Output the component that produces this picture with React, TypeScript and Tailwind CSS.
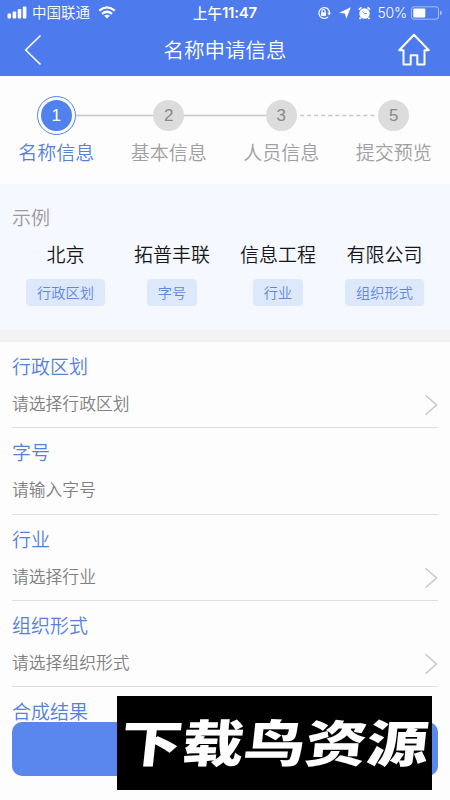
import React from "react";

const steps = [
  { n: "1", label: "名称信息" },
  { n: "2", label: "基本信息" },
  { n: "3", label: "人员信息" },
  { n: "5", label: "提交预览" },
];

const examples = [
  { value: "北京", tag: "行政区划", width: "w-[107px]" },
  { value: "拓普丰联", tag: "字号", width: "w-[106px]" },
  { value: "信息工程", tag: "行业", width: "w-[106px]" },
  { value: "有限公司", tag: "组织形式", width: "w-[107px]" },
];

const fields = [
  { label: "行政区划", hint: "请选择行政区划", select: true },
  { label: "字号", hint: "请输入字号", select: false },
  { label: "行业", hint: "请选择行业", select: true },
  { label: "组织形式", hint: "请选择组织形式", select: true },
];

function StatusBar() {
  return (
    <div className="grid h-[25px] grid-cols-[1fr_auto_1fr] items-center pl-[7px] pr-[7px] text-[14.5px] leading-[23px]">
      <div className="flex h-[25px] items-center">
        <svg width="21" height="13" viewBox="0 0 21 13" fill="white">
          <rect x="0.5" y="7.5" width="3.6" height="5" rx="1" />
          <rect x="5.6" y="5.5" width="3.6" height="7" rx="1" />
          <rect x="10.7" y="3" width="3.6" height="9.5" rx="1" />
          <rect x="15.8" y="0.5" width="3.6" height="12" rx="1" />
        </svg>
        <span className="ml-[4px] pb-[2px]">中国联通</span>
        <svg className="ml-[8px]" width="18" height="13" viewBox="0 0 18 13" fill="none" stroke="white" strokeWidth="2.3">
          <path d="M1.2 4.7Q9-2 16.8 4.7" />
          <path d="M4 7.8Q9 3.6 14 7.8" />
          <path d="M6.2 9.7Q9 7.6 11.8 9.7L9 12.6Z" fill="white" stroke="none" />
        </svg>
      </div>
      <span className="flex items-center pb-[1px] font-medium">
        上午
        <span className="text-[15px] font-bold tracking-[-0.2px] [font-family:Inter,sans-serif] [font-weight:600]">11:47</span>
      </span>
      <div className="flex h-[25px] items-center justify-end">
        <svg width="14" height="14" viewBox="0 0 14 14" fill="none" stroke="white" strokeWidth="1.2">
          <path d="M11.4 3.5A5.4 5.4 0 1 0 11.2 10.8M10.6 2.5A5.4 5.4 0 0 1 12.2 7.6" />
          <path d="M10.2 6.8H14L12.1 9.3Z" fill="white" stroke="none" />
          <rect x="4" y="6.2" width="5" height="3.8" rx="0.4" fill="white" stroke="none" />
          <path d="M5 6.5V5a1.5 1.5 0 0 1 3 0v1.5" />
        </svg>
        <svg className="ml-[8px]" width="12" height="12" viewBox="0 0 12 12" fill="white">
          <path d="M11.8.3 7.4 11.8 5.9 6.5 .2 5.8Z" />
        </svg>
        <svg className="ml-[7px]" width="13" height="14" viewBox="0 0 13 14">
          <circle cx="6.5" cy="7.5" r="5.2" fill="white" />
          <path d="M.9 3.7 3.5 1.4M12.1 3.7 9.5 1.4M2.7 11.4 1.6 13M10.3 11.4 11.4 13" stroke="white" strokeWidth="1.8" />
          <path d="M4.2 5.4 6.5 7.8 8.8 7.4" fill="none" stroke="#4d7aec" strokeWidth="0.9" />
        </svg>
        <span className="ml-[7px] text-[14px] tracking-[-0.2px] [font-family:Inter,sans-serif]">50%</span>
        <svg className="ml-[4px]" width="32" height="14" viewBox="0 0 32 14">
          <rect x="0.5" y="0.8" width="27" height="12.4" rx="2.5" fill="none" stroke="white" strokeOpacity=".5" />
          <rect x="2.3" y="2.5" width="12" height="9" rx="1" fill="white" />
          <path d="M29 4.8Q31 5.2 31 7T29 9.2Z" fill="white" fillOpacity=".5" />
        </svg>
      </div>
    </div>
  );
}

function Connector({ dashed }: { dashed: boolean }) {
  return (
    <svg className="absolute left-1/2 top-[18px] h-[3px] w-full" viewBox="0 0 112 3" preserveAspectRatio="none">
      {dashed ? (
        <path d="M19 1.5H96" stroke="#c7c7c7" strokeWidth="1.3" strokeDasharray="4 3" />
      ) : (
        <path d="M0 1.5H112" stroke="#c7c7c7" strokeWidth="1.3" />
      )}
    </svg>
  );
}

export default function App() {
  return (
    <div className="relative h-[800px] w-[450px] overflow-hidden bg-[#fdfdfd] font-[350] [font-family:'Noto_Sans_CJK_SC',sans-serif]">
      <header className="h-[76px] bg-[#4d7aec] text-white">
        <StatusBar />
        <div className="grid h-[50px] grid-cols-[1fr_auto_1fr] items-center px-[18px]">
          <svg className="ml-[6px]" width="18" height="32" viewBox="0 0 18 32" fill="none" stroke="white" strokeWidth="1.6">
            <path d="M16.5 1.5 1.7 16 16.5 30.5" />
          </svg>
          <h1 className="pb-[2px] text-[20.5px] leading-[30px] [font-weight:350]">名称申请信息</h1>
          <svg className="mr-[2px] justify-self-end" width="34" height="34" viewBox="0 0 34 34" fill="none" stroke="white" strokeWidth="2" strokeLinejoin="round">
            <path d="M18 1.8 3.2 17.3H7.5V31.5H14.7V22.3H21.3V31.5H28.5V17.3H32.8Z" />
          </svg>
        </div>
      </header>

      <section className="flex h-[108px] pt-[20px]">
        {steps.map((step, i) => (
          <div key={step.n} className="relative flex w-[112.5px] flex-col items-center">
            {i < 3 && <Connector dashed={i === 2} />}
            <div className={i === 0 ? "relative flex h-[39px] w-[39px] items-center justify-center rounded-full border-[1.5px] border-[#5684ed] bg-[#fdfdfd]" : "relative flex h-[39px] w-[39px] items-center justify-center"}>
              <div className={i === 0 ? "flex h-[31px] w-[31px] items-center justify-center rounded-full bg-[#5081ec] text-[17px] text-white [font-family:'Liberation_Sans',sans-serif]" : "flex h-[31px] w-[31px] items-center justify-center rounded-full bg-[#dcdcdc] text-[17px] text-[#888] [font-family:'Liberation_Sans',sans-serif]"}>
                {step.n}
              </div>
            </div>
            <span className={i === 0 ? "mt-[3px] text-[19px] leading-[28px] text-[#5580df]" : "mt-[3px] text-[19px] leading-[28px] text-[#a0a0a0]"}>{step.label}</span>
          </div>
        ))}
      </section>

      <section className="h-[158px] border-b-[12px] border-[#f3f3f3] bg-[#f5f8ff] pl-[12px] pt-[19px]">
        <h2 className="text-[19px] leading-[28px] text-[#9b9b9b] [font-weight:350]">示例</h2>
        <div className="mt-[9px] flex">
          {examples.map((item) => (
            <div key={item.tag} className={`flex flex-col items-center ${item.width}`}>
              <span className="text-[19px] leading-[28px] text-[#161616]">{item.value}</span>
              <span className="mt-[11px] flex h-[27px] items-center rounded-[4px] bg-[#dee8fb] px-[11px] pb-[1px] text-[14.2px] leading-[26px] text-[#6088dc]">{item.tag}</span>
            </div>
          ))}
        </div>
      </section>

      <section className="px-[12px]">
        {fields.map((field) => (
          <div key={field.label} className="h-[86.25px] border-b-[1.5px] border-[#dfdfdf] pt-[10px]">
            <div className="text-[19px] leading-[28px] text-[#5580df]">{field.label}</div>
            <div className="mt-[10px] flex h-[28px] items-center justify-between">
              <span className="pb-[2px] text-[16.8px] leading-[26px] text-[#808080]">{field.hint}</span>
              {field.select && (
                <svg className="mt-[2px]" width="14" height="22" viewBox="0 0 14 22" fill="none" stroke="#c6c6c6" strokeWidth="1.5">
                  <path d="M1.5 1.2 12.5 11 1.5 20.8" />
                </svg>
              )}
            </div>
          </div>
        ))}
        <div className="pt-[10px] text-[19px] leading-[28px] text-[#5580df]">合成结果</div>
      </section>

      <button aria-label="提交" className="absolute left-[12px] top-[722px] h-[54px] w-[426px] rounded-[10px] bg-[#5a87ed]" />
      <div className="absolute left-[117px] top-[696px] flex h-[94px] w-[315px] items-center justify-center bg-black">
        <span className="-translate-y-[3px] -skew-x-[5deg] scale-x-[1.23] whitespace-nowrap text-[50px] font-black leading-[60px] text-white">下载鸟资源</span>
      </div>
    </div>
  );
}
